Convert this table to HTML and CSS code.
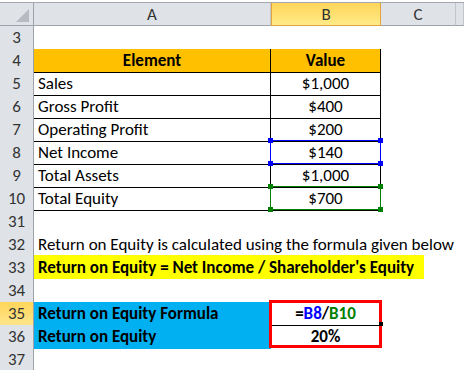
FILE: index.html
```html
<!DOCTYPE html>
<html>
<head>
<meta charset="utf-8">
<link rel="stylesheet" href="styles.css">
</head>
<body>
<div class="sheet">
  <div class="hdr">
    <div class="corner"><span class="tri"></span></div>
    <div class="ch">A</div>
    <div class="ch sel">B</div>
    <div class="ch">C</div>
    <div class="ch"></div>
  </div>
  <div class="row"><div class="rh">3</div><div class="c top"></div><div class="c top"></div><div class="c"></div><div class="c"></div></div>
  <div class="row"><div class="rh">4</div><div class="c t head ctr">Element</div><div class="c t head ctr">Value</div><div class="c"></div><div class="c"></div></div>
  <div class="row"><div class="rh">5</div><div class="c t">Sales</div><div class="c t ctr">$1,000</div><div class="c"></div><div class="c"></div></div>
  <div class="row"><div class="rh">6</div><div class="c t">Gross Profit</div><div class="c t ctr">$400</div><div class="c"></div><div class="c"></div></div>
  <div class="row"><div class="rh">7</div><div class="c t">Operating Profit</div><div class="c t ctr">$200</div><div class="c"></div><div class="c"></div></div>
  <div class="row"><div class="rh">8</div><div class="c t">Net Income</div><div class="c t ctr">$140</div><div class="c"></div><div class="c"></div></div>
  <div class="row"><div class="rh">9</div><div class="c t">Total Assets</div><div class="c t ctr">$1,000</div><div class="c"></div><div class="c"></div></div>
  <div class="row"><div class="rh">10</div><div class="c t">Total Equity</div><div class="c t ctr">$700</div><div class="c"></div><div class="c"></div></div>
  <div class="row"><div class="rh">31</div><div class="c"></div><div class="c"></div><div class="c"></div><div class="c"></div></div>
  <div class="row"><div class="rh">32</div><div class="c span">Return on Equity is calculated using the formula given below</div></div>
  <div class="row"><div class="rh">33</div><div class="c span"><span class="hl">Return on Equity = Net Income / Shareholder's Equity</span></div></div>
  <div class="row"><div class="rh">34</div><div class="c"></div><div class="c"></div><div class="c"></div><div class="c"></div></div>
  <div class="row"><div class="rh act">35</div><div class="c blue line">Return on Equity Formula</div><div class="c line ctr bold">=<span class="ref-b">B8</span>/<span class="ref-g">B10</span></div><div class="c"></div><div class="c"></div></div>
  <div class="row"><div class="rh">36</div><div class="c blue">Return on Equity</div><div class="c ctr bold">20%</div><div class="c"></div><div class="c"></div></div>
  <div class="row"><div class="rh">37</div><div class="c"></div><div class="c"></div><div class="c"></div><div class="c"></div></div>

  <div class="selbox sel-blue"><i class="k tl"></i><i class="k tr"></i><i class="k bl"></i><i class="k br"></i></div>
  <div class="selbox sel-green"><i class="k tl"></i><i class="k tr"></i><i class="k bl"></i><i class="k br"></i></div>
  <div class="redbox"></div>
  <div class="handle"></div>
</div>
</body>
</html>
```

FILE: styles.css
```css
* { box-sizing: border-box; }
body {
  margin: 0;
  background: #fff;
  font-family: Carlito, Calibri, Lato, "Liberation Sans", sans-serif;
  font-size: 17px;
  color: #000;
}
.sheet {
  position: relative;
  width: 464px;
  height: 370px;
  overflow: hidden;
  padding-top: 2px;
}
.hdr, .row {
  display: grid;
  grid-template-columns: 34px 237px 110px 75px 1fr;
}
.hdr {
  height: 24px;
  border-top: 1px solid #a4a7ab;
}
.corner, .ch {
  background: #dfe3e8;
  border-right: 1px solid #c2c5ca;
  border-bottom: 1px solid #9ea3a9;
  position: relative;
}
.corner { border-right-color: #9ea3a9; }
.tri {
  position: absolute;
  right: 4px;
  bottom: 3px;
  width: 0;
  height: 0;
  border-left: 13px solid transparent;
  border-bottom: 13px solid #b7bbc1;
}
.ch {
  display: flex;
  align-items: center;
  justify-content: center;
  color: #333;
  font-size: 17px;
  padding-top: 1px;
}
.ch.sel {
  background: linear-gradient(#ffd55a, #ffeb86);
  border-right: 1px solid #e2a23c;
  border-left: 1px solid #e2a23c;
  border-bottom: 1px solid #e2a23c;
}
.row { height: 23px; }
.rh {
  background: #dfe3e8;
  border-right: 1px solid #9ea3a9;
  border-bottom: 1px solid #c8cbd0;
  text-align: center;
  line-height: 23px;
  color: #333;
  font-size: 17px;
}
.rh.act {
  background: linear-gradient(#ffd55a, #ffe58a);
  border-bottom-color: #e2a23c;
}
.c {
  border-right: 1px solid transparent;
  border-bottom: 1px solid transparent;
  line-height: 23px;
  padding: 0 4px;
  white-space: nowrap;
}
.top { border-bottom-color: #000; }
.t { border-right-color: #000; border-bottom-color: #000; }
.head { background: #ffc000; font-weight: bold; }
.ctr { text-align: center; }
.bold { font-weight: bold; }
.span { grid-column: 2 / -1; overflow: visible; }
.hl {
  display: inline-block;
  margin-left: -4px;
  margin-top: -1px;
  width: 390px;
  height: 24px;
  padding-left: 4px;
  background: #ffff00;
  font-weight: bold;
  line-height: 25px;
}
.blue { background: #00b0f0; font-weight: bold; }
.line { border-bottom-color: #000; }
.ref-b { color: #0000ff; }
.ref-g { color: #008000; }
.selbox {
  position: absolute;
  left: 270px;
  width: 111px;
  height: 24px;
  border: 1px solid;
}
.sel-blue { top: 140px; border-color: #0000ff; }
.sel-green { top: 186px; border-color: #008000; }
.k {
  position: absolute;
  width: 5px;
  height: 5px;
}
.sel-blue .k { background: #0000ff; }
.sel-green .k { background: #008000; }
.tl { left: -3px; top: -3px; }
.tr { right: -3px; top: -3px; }
.bl { left: -3px; bottom: -3px; }
.br { right: -3px; bottom: -3px; }
.redbox {
  position: absolute;
  left: 269px;
  top: 300px;
  width: 113px;
  height: 48px;
  border: 3px solid #ff0000;
}
.handle {
  position: absolute;
  left: 379px;
  top: 322px;
  width: 4px;
  height: 4px;
  background: #000;
}
```
